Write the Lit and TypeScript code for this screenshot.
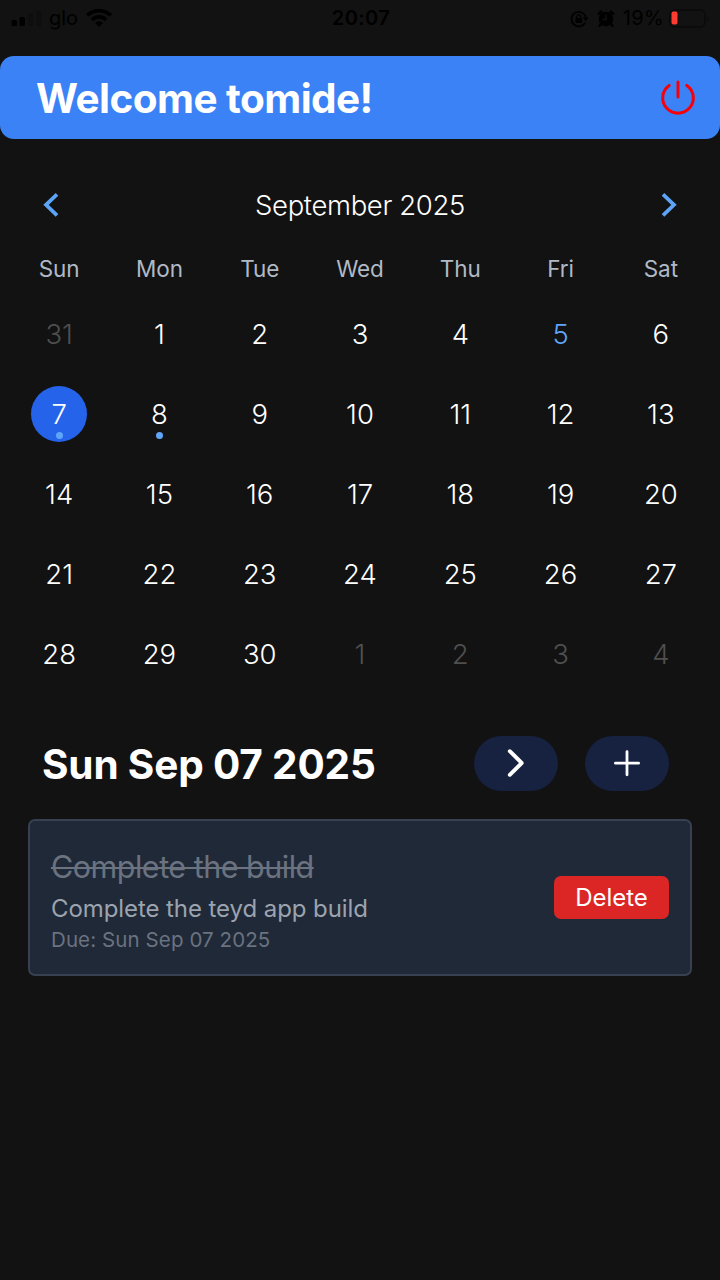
import { LitElement, html, css } from "lit";
import { customElement } from "lit/decorators.js";
import { classMap } from "lit/directives/class-map.js";

const WEEKDAYS = ["Sun", "Mon", "Tue", "Wed", "Thu", "Fri", "Sat"];

interface Day {
  n: number;
  out?: boolean;
  today?: boolean;
  selected?: boolean;
  dot?: boolean;
}

const DAYS: Day[] = [
  { n: 31, out: true },
  ...Array.from({ length: 30 }, (_, i) => ({
    n: i + 1,
    today: i + 1 === 5,
    selected: i + 1 === 7,
    dot: i + 1 === 7 || i + 1 === 8,
  })),
  ...[1, 2, 3, 4].map((n) => ({ n, out: true })),
];

@customElement("status-bar")
class StatusBar extends LitElement {
  static styles = css`
    :host {
      display: flex;
      justify-content: space-between;
      height: 37px;
      padding: 0 9px 0 11px;
      color: #000;
      font-size: 20px;
      line-height: 37px;
    }
    .side {
      display: flex;
      align-items: center;
      flex: 1 1 0;
    }
    .right {
      justify-content: flex-end;
    }
    .carrier {
      margin: 0 7px 0 7px;
    }
    .clock {
      font-weight: 600;
      letter-spacing: 0.4px;
    }
    .pct {
      margin: 0 5px 0 8px;
      letter-spacing: 0.4px;
    }
    .alarm {
      margin-left: 8px;
    }
    svg {
      display: block;
      flex: none;
    }
  `;
  render() {
    return html`
      <div class="side">
        <svg width="31" height="18" viewBox="0 0 31 18">
          <rect x="0.5" y="10" width="5.5" height="6" rx="1.5" />
          <rect x="8.5" y="7" width="5.5" height="9" rx="1.5" />
          <rect x="17" y="3" width="5.5" height="13" rx="1.5" fill="#0e0e0e" />
          <rect x="25" y="0.5" width="5.5" height="15.5" rx="1.5" fill="#0e0e0e" />
        </svg>
        <span class="carrier">glo</span>
        <svg width="28" height="20" viewBox="0 0 28 20">
          <path d="M14 18 L10 14 a5.7 5.7 0 0 1 8 0z" />
          <path d="M6.9 10.8 a10.2 10.2 0 0 1 14.2 0 M2.2 6.4 a17 17 0 0 1 23.6 0"
            fill="none" stroke="#000" stroke-width="3.7" />
        </svg>
      </div>
      <div class="clock">20:07</div>
      <div class="side right">
        <svg width="19" height="18" viewBox="0 0 19 18">
          <path d="M15.2 12.6 a7.3 7.3 0 1 1 0.5 -5.8" fill="none" stroke="#000" stroke-width="1.7" />
          <path d="M12.8 7.2 h5.8 l-2.9 4z" />
          <rect x="5.4" y="8" width="6.8" height="5" rx="1" />
          <path d="M6.9 8.5 v-1.7 a1.9 1.9 0 0 1 3.8 0 v1.7" fill="none" stroke="#000" stroke-width="1.2" />
        </svg>
        <svg class="alarm" width="18" height="18" viewBox="0 0 18 18">
          <circle cx="9" cy="9" r="7.3" />
          <path d="M4 14 L2.6 15.8 M14 14 L15.4 15.8 M1.7 3.8 L4.2 1.5 M16.3 3.8 L13.8 1.5"
            stroke="#000" stroke-width="2.4" stroke-linecap="round" />
          <path d="M9 4.5 V9.5 H5.4" fill="none" stroke="#121212" stroke-width="1.4" />
        </svg>
        <span class="pct">19%</span>
        <svg width="42" height="20" viewBox="0 0 42 20">
          <rect x="0.9" y="0.9" width="35" height="17" rx="4.5" fill="none" stroke="#0b0b0b" stroke-width="1.6" />
          <path d="M38 7 a3.5 3.5 0 0 1 0 6z" fill="#0b0b0b" />
          <rect x="2.5" y="2.5" width="6" height="13" rx="2" fill="#ff3b30" />
        </svg>
      </div>
    `;
  }
}

@customElement("month-calendar")
class MonthCalendar extends LitElement {
  static styles = css`
    :host {
      display: block;
      padding: 0 9px;
    }
    .head {
      display: flex;
      align-items: center;
      justify-content: space-between;
      height: 56px;
      padding: 0 31px;
    }
    .month {
      font-size: 27.5px;
      font-weight: 300;
      letter-spacing: -0.36px;
      color: #fff;
    }
    .grid {
      display: grid;
      grid-template-columns: repeat(7, 1fr);
      justify-items: center;
    }
    .names {
      margin-top: 20px;
      height: 32px;
      line-height: 32px;
      font-size: 22.5px;
      letter-spacing: -0.1px;
      color: #b0bac6;
    }
    .days {
      margin-top: 21px;
      grid-auto-rows: 56px;
      row-gap: 24px;
    }
    .day {
      display: flex;
      flex-direction: column;
      align-items: center;
      width: 56px;
      height: 56px;
      border-radius: 50%;
      font-size: 27.5px;
      font-weight: 300;
      line-height: 56px;
      color: #fff;
    }
    .out {
      color: #4f4f4f;
    }
    .today {
      color: #60a5fa;
    }
    .selected {
      background: #2563eb;
    }
    .dot {
      width: 7px;
      height: 7px;
      margin-top: -10px;
      border-radius: 50%;
      background: #60a5fa;
    }
    svg {
      display: block;
    }
  `;
  render() {
    const arrow = (d: string) => html`<svg width="22" height="28" viewBox="0 0 22 28">
      <path d=${d} fill="none" stroke="#5ba4f7" stroke-width="3.7" />
    </svg>`;
    return html`
      <div class="head">
        ${arrow("M17 3.3 L6 13.8 L17 24.3")}
        <div class="month">September 2025</div>
        ${arrow("M5 3.3 L16 13.8 L5 24.3")}
      </div>
      <div class="grid names">${WEEKDAYS.map((w) => html`<span>${w}</span>`)}</div>
      <div class="grid days">
        ${DAYS.map(
          (d) => html`<div
            class=${classMap({ day: true, out: !!d.out, today: !!d.today, selected: !!d.selected })}
          >
            <span>${d.n}</span>${d.dot ? html`<i class="dot"></i>` : ""}
          </div>`
        )}
      </div>
    `;
  }
}

@customElement("task-card")
class TaskCard extends LitElement {
  static styles = css`
    :host {
      display: flex;
      align-items: center;
      justify-content: space-between;
      box-sizing: border-box;
      height: 156.5px;
      margin: 0 28px;
      padding: 0 21px;
      border: 2px solid #374151;
      border-radius: 7px;
      background: #1f2937;
    }
    .text {
      padding-top: 4px;
    }
    .title {
      height: 42px;
      line-height: 42px;
      font-size: 30.5px;
      letter-spacing: -0.5px;
      color: #6b7280;
      text-decoration: line-through;
      text-decoration-thickness: 2px;
    }
    .note {
      height: 40px;
      line-height: 42px;
      font-size: 24px;
      letter-spacing: -0.08px;
      color: #9ca3af;
    }
    .due {
      height: 24px;
      line-height: 24px;
      font-size: 20.5px;
      letter-spacing: 0.1px;
      color: #6b7280;
    }
    .delete {
      box-sizing: border-box;
      width: 115px;
      height: 43.5px;
      padding: 0;
      border: 0;
      border-radius: 7px;
      background: #dc2626;
      color: #fff;
      font: inherit;
      font-size: 24px;
      line-height: 43.5px;
      text-align: center;
    }
  `;
  render() {
    return html`
      <div class="text">
        <div class="title"><span>Complete the build</span></div>
        <div class="note"><span>Complete the teyd app build</span></div>
        <div class="due"><span>Due: Sun Sep 07 2025</span></div>
      </div>
      <button class="delete">Delete</button>
    `;
  }
}

@customElement("app-root")
class AppRoot extends LitElement {
  static styles = css`
    :host {
      display: block;
      height: 1280px;
      overflow: hidden;
      background: #121212;
      font-family: Inter, "Liberation Sans", sans-serif;
      color: #fff;
      white-space: nowrap;
    }
    .banner {
      display: flex;
      align-items: center;
      justify-content: space-between;
      box-sizing: border-box;
      height: 83px;
      margin-top: 19px;
      padding: 0 24px 0 36px;
      border-radius: 14px;
      background: #3b82f6;
    }
    .hello {
      padding-top: 1px;
      font-size: 40.5px;
      font-weight: 700;
      letter-spacing: -0.55px;
    }
    .calendar {
      margin-top: 38px;
    }
    .agenda {
      display: flex;
      align-items: center;
      height: 55.5px;
      margin: 53.6px 51px 28px 42px;
    }
    .date {
      flex: 1;
      padding-top: 2.5px;
      font-size: 40.5px;
      font-weight: 700;
      letter-spacing: -0.17px;
    }
    .pill {
      display: flex;
      align-items: center;
      justify-content: center;
      width: 84px;
      height: 55.5px;
      margin-left: 27px;
      border-radius: 28px;
      background: #172140;
    }
  `;
  render() {
    return html`
      <status-bar></status-bar>
      <div class="banner">
        <span class="hello">Welcome tomide!</span>
        <svg width="36" height="36" viewBox="0 0 36 36" fill="none" stroke="#f8000a"
          stroke-width="3" stroke-linecap="round">
          <path d="M9.2 5.4 A15.3 15.3 0 1 0 26.8 5.4 M18 2.1 V17" />
        </svg>
      </div>
      <month-calendar class="calendar"></month-calendar>
      <div class="agenda">
        <span class="date">Sun Sep 07 2025</span>
        <div class="pill">
          <svg width="28" height="32" viewBox="0 0 28 32" fill="none" stroke="#fff"
            stroke-width="3.9" stroke-linecap="round" stroke-linejoin="round">
            <path d="M7.8 4.2 L19.7 16 L7.8 27.8" />
          </svg>
        </div>
        <div class="pill">
          <svg width="28" height="28" viewBox="0 0 28 28" stroke="#fff" stroke-width="2.8" stroke-linecap="round">
            <path d="M14 2.6 V25.8 M2.4 14.2 H25.6" />
          </svg>
        </div>
      </div>
      <task-card></task-card>
    `;
  }
}
